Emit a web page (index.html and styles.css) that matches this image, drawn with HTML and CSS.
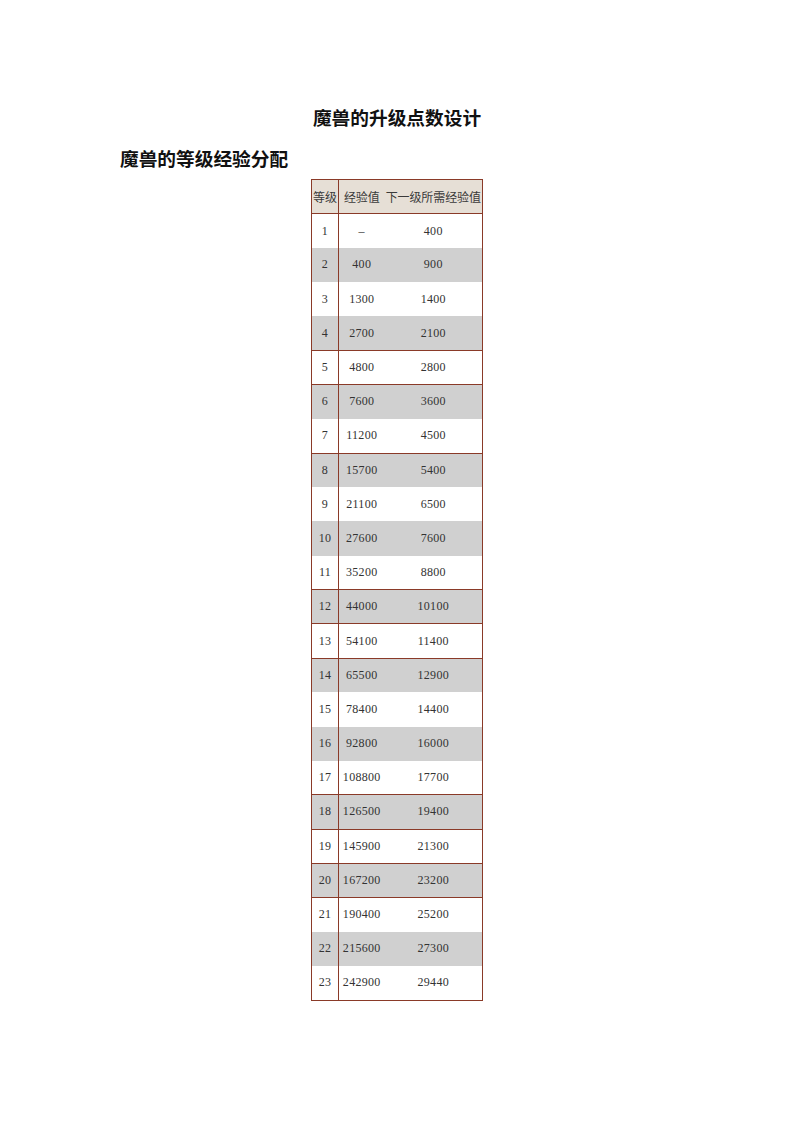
FILE: index.html
```html
<!DOCTYPE html>
<html lang="zh">
<head>
<meta charset="utf-8">
<link rel="stylesheet" href="styles.css">
</head>
<body>
<div class="page">
  <h1 class="title">魔兽的升级点数设计</h1>
  <h2 class="section">魔兽的等级经验分配</h2>
  <table class="exp">
    <thead>
      <tr class="head line"><th class="c1">等级</th><th class="c2">经验值</th><th class="c3">下一级所需经验值</th></tr>
    </thead>
    <tbody>
      <tr><td class="c1">1</td><td class="c2">–</td><td class="c3">400</td></tr>
      <tr class="gray"><td class="c1">2</td><td class="c2">400</td><td class="c3">900</td></tr>
      <tr><td class="c1">3</td><td class="c2">1300</td><td class="c3">1400</td></tr>
      <tr class="gray line"><td class="c1">4</td><td class="c2">2700</td><td class="c3">2100</td></tr>
      <tr class="line"><td class="c1">5</td><td class="c2">4800</td><td class="c3">2800</td></tr>
      <tr class="gray"><td class="c1">6</td><td class="c2">7600</td><td class="c3">3600</td></tr>
      <tr class="line"><td class="c1">7</td><td class="c2">11200</td><td class="c3">4500</td></tr>
      <tr class="gray"><td class="c1">8</td><td class="c2">15700</td><td class="c3">5400</td></tr>
      <tr><td class="c1">9</td><td class="c2">21100</td><td class="c3">6500</td></tr>
      <tr class="gray"><td class="c1">10</td><td class="c2">27600</td><td class="c3">7600</td></tr>
      <tr class="line"><td class="c1">11</td><td class="c2">35200</td><td class="c3">8800</td></tr>
      <tr class="gray line"><td class="c1">12</td><td class="c2">44000</td><td class="c3">10100</td></tr>
      <tr class="line"><td class="c1">13</td><td class="c2">54100</td><td class="c3">11400</td></tr>
      <tr class="gray"><td class="c1">14</td><td class="c2">65500</td><td class="c3">12900</td></tr>
      <tr><td class="c1">15</td><td class="c2">78400</td><td class="c3">14400</td></tr>
      <tr class="gray"><td class="c1">16</td><td class="c2">92800</td><td class="c3">16000</td></tr>
      <tr class="line"><td class="c1">17</td><td class="c2">108800</td><td class="c3">17700</td></tr>
      <tr class="gray line"><td class="c1">18</td><td class="c2">126500</td><td class="c3">19400</td></tr>
      <tr class="line"><td class="c1">19</td><td class="c2">145900</td><td class="c3">21300</td></tr>
      <tr class="gray line"><td class="c1">20</td><td class="c2">167200</td><td class="c3">23200</td></tr>
      <tr><td class="c1">21</td><td class="c2">190400</td><td class="c3">25200</td></tr>
      <tr class="gray"><td class="c1">22</td><td class="c2">215600</td><td class="c3">27300</td></tr>
      <tr><td class="c1">23</td><td class="c2">242900</td><td class="c3">29440</td></tr>
    </tbody>
  </table>
</div>
</body>
</html>
```
FILE: styles.css
```css
html, body {
  margin: 0;
  padding: 0;
  background: #ffffff;
}

.page {
  width: 794px;
  padding-top: 103px;
  box-sizing: border-box;
  font-family: "Liberation Serif", "Noto Sans CJK SC", serif;
  color: #333333;
}

.title {
  margin: 0;
  height: 28px;
  line-height: 28px;
  text-align: center;
  font-family: "Noto Sans CJK SC", sans-serif;
  font-size: 18.7px;
  font-weight: bold;
  color: #111111;
}

.section {
  margin: 13px 0 0 120px;
  height: 28px;
  line-height: 28px;
  font-family: "Noto Sans CJK SC", sans-serif;
  font-size: 18.7px;
  font-weight: bold;
  color: #111111;
}

.exp {
  margin: 7px 0 0 311px;
  border-collapse: collapse;
  border: 1px solid #8a3a28;
  table-layout: fixed;
  width: 172px;
}

.exp th,
.exp td {
  padding: 0;
  height: 34.2px;
  box-sizing: border-box;
  text-align: center;
  vertical-align: middle;
  white-space: nowrap;
  overflow: visible;
}

.exp th {
  font-family: "Noto Sans CJK SC", sans-serif;
  font-weight: normal;
  font-size: 12px;
  color: #3a3a3a;
  letter-spacing: -0.1px;
}

.exp td {
  font-family: "Liberation Serif", serif;
  font-size: 12px;
  color: #333333;
  letter-spacing: 0.3px;
}

.exp .c1 {
  width: 27px;
  border-right: 1px solid #8a3a28;
}

.exp .c2 {
  width: 46px;
}

.exp .c3 {
  width: 98px;
}

.exp .head {
  background: #e6dfd6;
}

.exp .gray {
  background: #d0d0d0;
}

.exp .line td,
.exp .line th {
  border-bottom: 1px solid #8a3a28;
}
```
